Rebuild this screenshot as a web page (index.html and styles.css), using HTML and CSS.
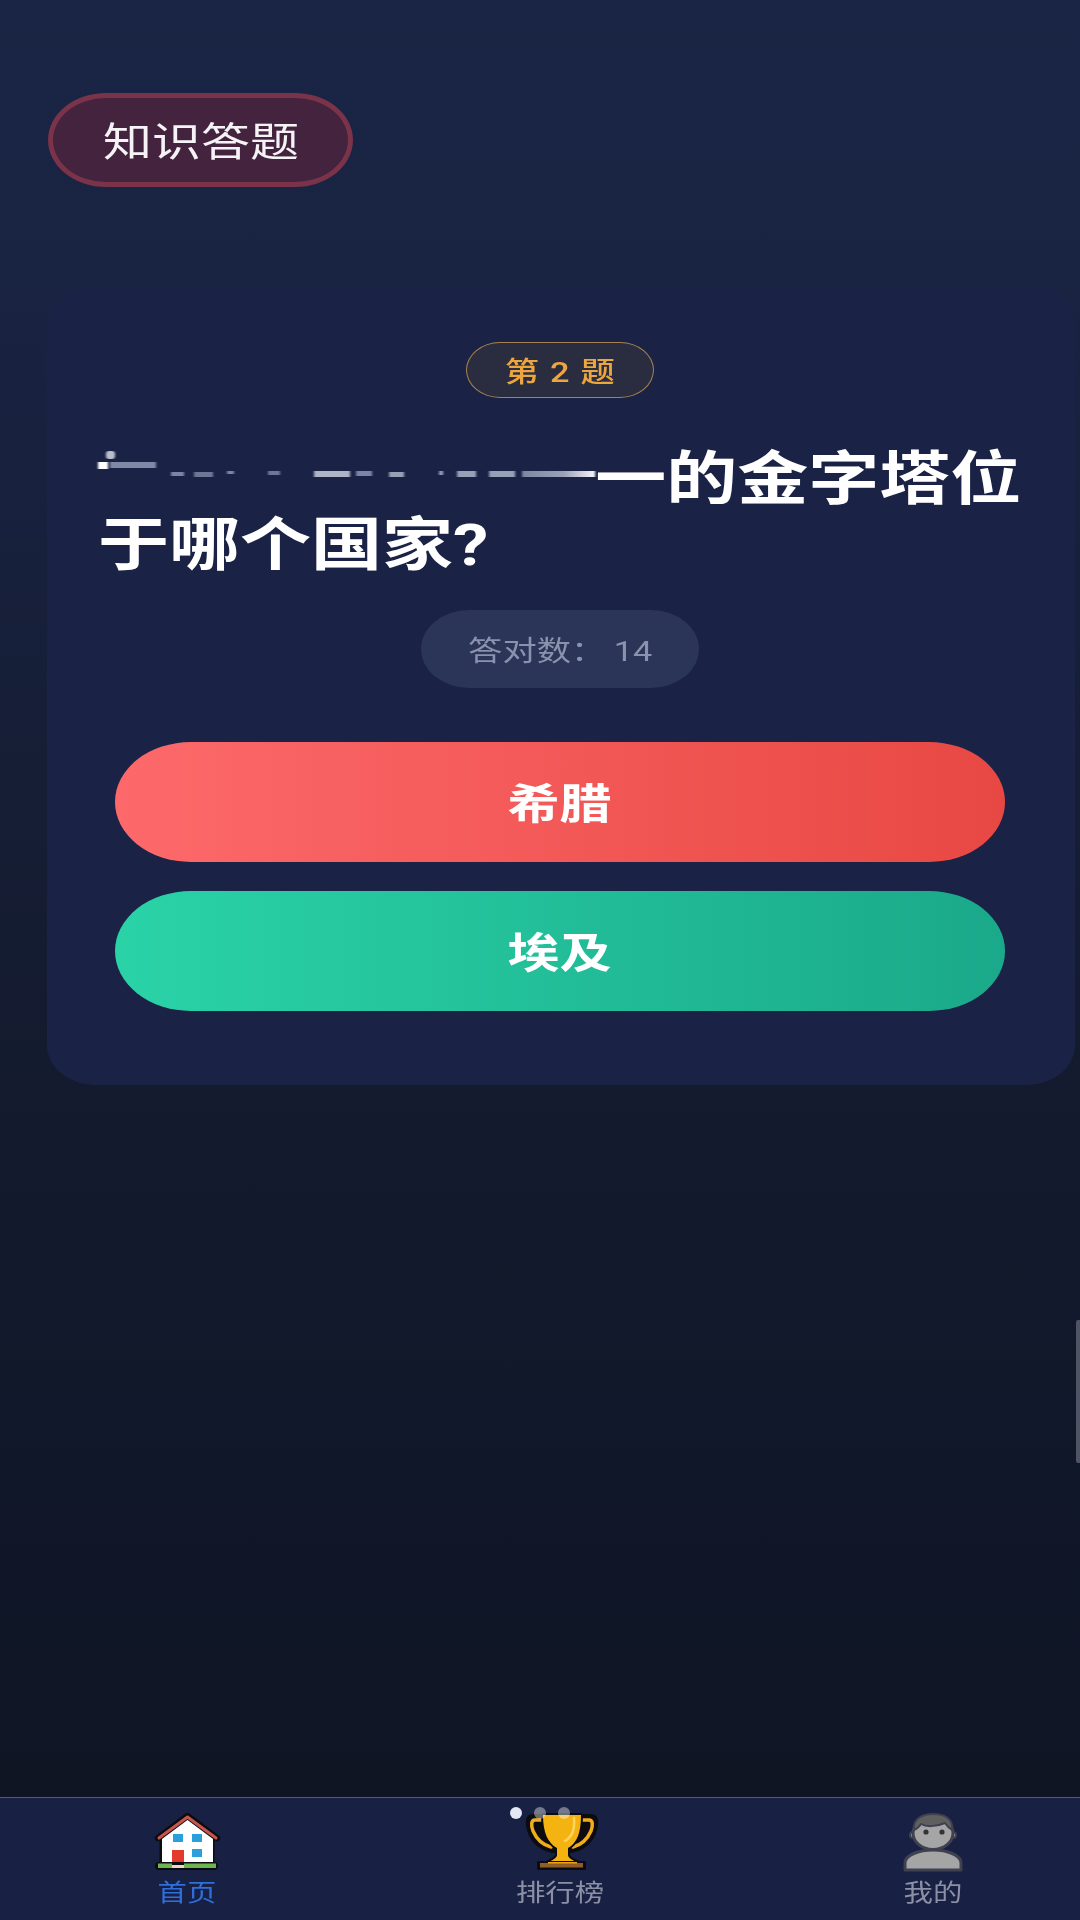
FILE: index.html
```html
<!DOCTYPE html>
<html lang="zh-CN">
<head>
<meta charset="utf-8">
<title>知识答题</title>
<link rel="stylesheet" href="styles.css">
</head>
<body>
<div class="app">
  <main class="main">
    <header class="tag"><span class="wide">知识答题</span></header>
    <section class="card">
      <div class="badge"><span class="wide">第 2 题</span></div>
      <h1 class="title"><svg class="smear" viewBox="0 0 497 66" preserveAspectRatio="none" aria-hidden="true">
          <defs><linearGradient id="fade" x1="0" x2="1" y1="0" y2="0"><stop offset="0" stop-color="#7d87a3"/><stop offset="0.55" stop-color="#9aa2b8"/><stop offset="1" stop-color="#ffffff"/></linearGradient></defs>
          <rect x="8" y="5" width="9" height="8" rx="3" fill="#b9bfcc"/>
          <rect x="0" y="16" width="10" height="7" fill="#ffffff"/>
          <rect x="12" y="16" width="46" height="6" fill="#7f89a6"/>
          <rect x="73" y="26" width="13" height="4" fill="#7b86a3"/>
          <rect x="96" y="26" width="19" height="5" fill="#6d7896"/>
          <rect x="129" y="25" width="7" height="3" fill="#7b86a3"/>
          <rect x="170" y="25" width="12" height="4" fill="#6d7896"/>
          <rect x="216" y="25" width="36" height="6" fill="#aeb4c6"/>
          <rect x="258" y="25" width="16" height="5" fill="#7b86a3"/>
          <rect x="291" y="26" width="15" height="5" fill="#98a0b6"/>
          <rect x="341" y="25" width="4" height="4" fill="#98a0b6"/>
          <rect x="359" y="25" width="19" height="6" fill="#98a0b6"/>
          <rect x="391" y="25" width="26" height="6" fill="#98a0b6"/>
          <rect x="424" y="25" width="76" height="6" fill="url(#fade)"/>
        </svg>一的金字塔位于哪个国家?</h1>
      <div class="stats"><span class="wide">答对数&#xFF1A; 14</span></div>
      <div class="options">
        <button class="option option-red"><span class="wide">希腊</span></button>
        <button class="option option-green"><span class="wide">埃及</span></button>
      </div>
    </section>
  </main>
  <nav class="nav">
    <a class="nav-item active">
      <svg class="icon" viewBox="-1 0 85 75" aria-hidden="true">
        <path d="M17 34 V62 H67 V34" fill="#fff" stroke="#0b0b10" stroke-width="5" stroke-linejoin="round"/>
        <path d="M17 33 L42.5 13 L68 33 V59 H17 Z" fill="#fff"/>
        <path d="M13 33 L42.5 11 L72 33" fill="none" stroke="#0b0b10" stroke-width="6.5" stroke-linejoin="round" stroke-linecap="round"/>
        <path d="M14 33 L42.5 12 L71 33" fill="none" stroke="#c9544c" stroke-width="3" stroke-linejoin="round" stroke-linecap="round"/>
        <rect x="28" y="29" width="10" height="8" fill="#2a9fdb"/>
        <rect x="47" y="29" width="10" height="8" fill="#2a9fdb"/>
        <rect x="47" y="44" width="10" height="8" fill="#2a9fdb"/>
        <rect x="27" y="45" width="12" height="15" fill="#e23b2e"/>
        <rect x="10" y="57" width="63" height="8" rx="4" fill="#0b0b10"/>
        <path d="M13 58.5 H27 V63 H13 Z M39 58.5 H71 V63 H39 Z" fill="#6db552"/>
        <rect x="27" y="60" width="12" height="3" fill="#f2d4c8"/>
      </svg>
      <span class="label"><span class="wide">首页</span></span>
    </a>
    <a class="nav-item">
      <svg class="icon icon-trophy" viewBox="2 0 105 75" aria-hidden="true">
        <path d="M38 11 H28 C21 11 22 20 25 28 C29 38 38 44 48 46 H66 C76 44 85 38 89 28 C92 20 93 11 86 11 H76 Z" fill="#0b0b10" stroke="#0b0b10" stroke-width="4" stroke-linejoin="round"/>
        <path d="M38 15 H30 C26 15 26 20 28 26 C32 35 38 40 46 42 M76 15 H84 C88 15 88 20 86 26 C82 35 76 40 68 42" fill="none" stroke="#f0ac1c" stroke-width="3.5" stroke-linecap="round"/>
        <path d="M38 10 H76 C76 28 72 38 63 43 V50 C63 53 67 55 74 58 H41 C48 55 52 53 52 50 V43 C43 38 38 28 38 10 Z" fill="#f5b312" stroke="#0b0b10" stroke-width="4" stroke-linejoin="round"/>
        <path d="M38 10 H76 C76 28 72 38 63 43 V50 C63 53 67 55 74 58 H41 C48 55 52 53 52 50 V43 C43 38 38 28 38 10 Z" fill="#f5b312"/>
        <path d="M69 13 C70 24 67 32 60 36" fill="none" stroke="#fbd45f" stroke-width="2.5" stroke-linecap="round"/>
        <rect x="32" y="56" width="49" height="9" rx="1.5" fill="#0b0b10"/>
        <rect x="35" y="58" width="43" height="4.5" fill="#8f5c2a"/>
        <path d="M43 57 H72 V58.5 H43 Z" fill="#e9a41a"/>
      </svg>
      <span class="label"><span class="wide">排行榜</span></span>
    </a>
    <a class="nav-item">
      <svg class="icon" viewBox="-3 0 85 75" aria-hidden="true">
        <path d="M11 65 V58 C11 50 25 45 39 45 C53 45 67 50 67 58 V65 Z" fill="#a5a5a5" stroke="#3f4150" stroke-width="3" stroke-linejoin="round"/>
        <circle cx="19" cy="30" r="3" fill="#a5a5a5" stroke="#3f4150" stroke-width="2"/>
        <circle cx="59" cy="30" r="3" fill="#a5a5a5" stroke="#3f4150" stroke-width="2"/>
        <ellipse cx="39" cy="28" rx="20" ry="16.5" fill="#a5a5a5" stroke="#3f4150" stroke-width="3"/>
        <path d="M20 25 C18 13 30 9 39 9 C49 9 60 13 58 25 C55 23 53 21 51 18 C42 22 32 22 27 19 C25 22 23 24 20 25 Z" fill="#5f5f5f" stroke="#3f4150" stroke-width="2" stroke-linejoin="round"/>
        <circle cx="32" cy="27" r="2.6" fill="#33343a"/>
        <circle cx="48" cy="27" r="2.6" fill="#33343a"/>
      </svg>
      <span class="label"><span class="wide">我的</span></span>
    </a>
  </nav>
</div>
<div class="dots"><i class="dot dot-on"></i><i class="dot"></i><i class="dot"></i></div>
<div class="edge-bar"></div>
</body>
</html>
```
FILE: styles.css
```css
* { box-sizing: border-box; }
html, body {
  margin: 0;
  width: 1080px;
  height: 1920px;
  overflow: hidden;
}
body {
  position: relative;
  background: #0f1421;
  font-family: Roboto, "Noto Sans CJK SC", sans-serif;
  color: #fff;
}
.app {
  width: 1120px;
  height: 1920px;
  display: flex;
  flex-direction: column;
  background: linear-gradient(180deg, #1a2444 0%, #192342 15%, #161e36 40%, #131a2d 60%, #101729 78%, #0f1421 100%);
}
.main {
  flex: 1;
  padding: 93px 45px 0 47px;
  display: flex;
  flex-direction: column;
  align-items: flex-start;
}
.wide {
  display: inline-block;
  transform: scaleX(1.2245);
  white-space: nowrap;
}
.tag {
  width: 305px;
  height: 94px;
  margin-left: 1px;
  padding-bottom: 2px;
  display: flex;
  align-items: center;
  justify-content: center;
  background: #43233d;
  border: 5px solid #7a3349;
  border-radius: 58px / 47px;
  font-size: 40px;
  color: #f6f3f6;
}
.card {
  width: 1028px;
  height: 800px;
  margin-top: 98px;
  padding: 57px 55px 74px 53px;
  display: flex;
  flex-direction: column;
  align-items: center;
  background: #1a2345;
  border-radius: 48px / 40px;
}
.badge {
  width: 188px;
  height: 56px;
  display: flex;
  align-items: center;
  justify-content: center;
  background: #2a2d40;
  border: 1.5px solid #a5824f;
  border-radius: 34px / 28px;
  color: #eda53d;
  font-size: 28px;
  font-weight: 500;
  letter-spacing: 1px;
}
.title {
  align-self: flex-start;
  width: 770px;
  margin: 48px 0 0 -2px;
  font-size: 58px;
  line-height: 66px;
  font-weight: 700;
  color: #fff;
  transform: scaleX(1.2245);
  transform-origin: left center;
}
.smear {
  display: inline-block;
  width: 406px;
  height: 66px;
  vertical-align: top;
  filter: blur(0.7px);
}
.stats {
  width: 278px;
  height: 78px;
  margin-top: 32px;
  display: flex;
  align-items: center;
  justify-content: center;
  background: #2b3557;
  border-radius: 48px / 39px;
  color: #8a92ad;
  font-size: 28px;
}
.options {
  align-self: stretch;
  margin: 54px 15px 0;
  display: flex;
  flex-direction: column;
  gap: 29px;
}
.option {
  height: 120px;
  border: 0;
  padding: 0 0 4px;
  border-radius: 76px / 60px;
  font: 700 42.5px Roboto, "Noto Sans CJK SC", sans-serif;
  color: #fff;
}
.option-red { background: linear-gradient(90deg, #fd696b, #e84843); }
.option-green { background: linear-gradient(90deg, #2ad3a7, #1aa98a); }
.nav {
  height: 123px;
  padding-top: 7px;
  display: grid;
  grid-template-columns: repeat(3, 1fr);
  background: #182044;
  border-top: 1px solid #4e5a7d;
}
.nav-item {
  display: flex;
  flex-direction: column;
  align-items: center;
  font-size: 24px;
  color: #8b90a5;
}
.nav-item.active { color: #2f6fdc; }
.icon {
  width: 85px;
  height: 75px;
  flex: none;
}
.icon-trophy { width: 105px; }
.label {
  line-height: 28px;
  margin-top: -1px;
}
.dots {
  position: absolute;
  left: 510px;
  top: 1807px;
  display: flex;
  gap: 12px;
}
.dot {
  width: 12px;
  height: 12px;
  border-radius: 50%;
  background: rgba(255, 255, 255, 0.4);
}
.dot-on { background: #e4e8f5; }
.edge-bar {
  position: absolute;
  left: 1076px;
  top: 1320px;
  width: 4px;
  height: 143px;
  background: #4f5364;
  border-radius: 2px 0 0 2px;
}
```
